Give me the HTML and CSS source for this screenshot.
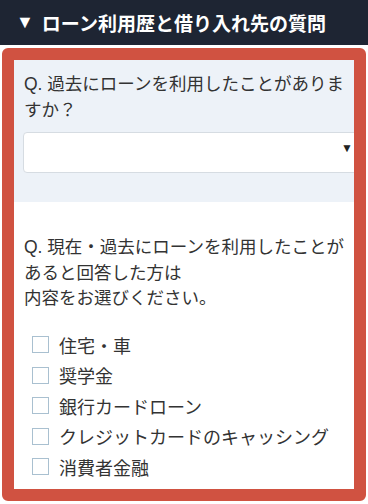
FILE: index.html
```html
<!DOCTYPE html>
<html lang="ja">
<head>
    <meta charset="UTF-8">
    <meta name="viewport" content="width=device-width, initial-scale=1.0">
    <title>ローン利用歴と借り入れ先の質問</title>
    <link rel="stylesheet" href="styles.css">
</head>
<body>

<div class="heading">
    <span class="heading-arrow">▼</span>ローン利用歴と借り入れ先の質問
</div>

<div class="panel">
    <!-- Question 1 -->
    <div class="question question-first">
        <p class="question-text">Q. 過去にローンを利用したことがありますか？</p>
        <div class="select-box">
            <span class="select-arrow">▼</span>
        </div>
    </div>

    <!-- Question 2 -->
    <div class="question question-second">
        <p class="question-text"><span class="nowrap">Q. 現在・過去にローンを利用したことが</span><br>あると回答した方は<br>内容をお選びください。</p>
        <ul class="check-list">
            <li><span class="check-box"></span>住宅・車</li>
            <li><span class="check-box"></span>奨学金</li>
            <li><span class="check-box"></span>銀行カードローン</li>
            <li><span class="check-box"></span>クレジットカードのキャッシング</li>
            <li><span class="check-box"></span>消費者金融</li>
        </ul>
    </div>
</div>

</body>
</html>
```

FILE: styles.css
```css
body {
    margin: 0;
    background-color: #fff;
    color: #333;
    font-family: "Liberation Sans", "Noto Sans CJK JP", sans-serif;
}
.heading {
    height: 45px;
    display: flex;
    align-items: center;
    padding-left: 16px;
    background-color: #1e2533;
    color: #fff;
    font-size: 19px;
    font-weight: bold;
}
.heading-arrow {
    font-size: 18px;
    margin-right: 8px;
}
.panel {
    margin: 3px 2px 0;
    height: 429px;
    border: 12px solid #d05241;
    border-radius: 6px;
    overflow: hidden;
}
.question-text {
    margin: 0;
    font-size: 17.5px;
    line-height: 25.5px;
}
.nowrap {
    white-space: nowrap;
}
.question-first {
    background-color: #edf2f8;
    padding: 12px 0 29px 10px;
}
.select-box {
    display: flex;
    align-items: center;
    justify-content: flex-end;
    height: 39px;
    margin-top: 9px;
    margin-left: -1px;
    margin-right: -14px;
    padding-right: 14px;
    background-color: #fff;
    border: 1px solid #d6dce2;
    border-radius: 4px;
}
.select-arrow {
    font-size: 12px;
    color: #222;
    margin-top: -9px;
}
.question-second {
    padding: 33px 0 0 10px;
}
.check-list {
    list-style: none;
    margin: 18px 0 0;
    padding: 0 0 0 8px;
}
.check-list li {
    display: flex;
    align-items: center;
    height: 30.5px;
    font-size: 18px;
}
.check-box {
    width: 15px;
    height: 15px;
    border: 1px solid #a9c0d0;
    margin-right: 10px;
}
```
